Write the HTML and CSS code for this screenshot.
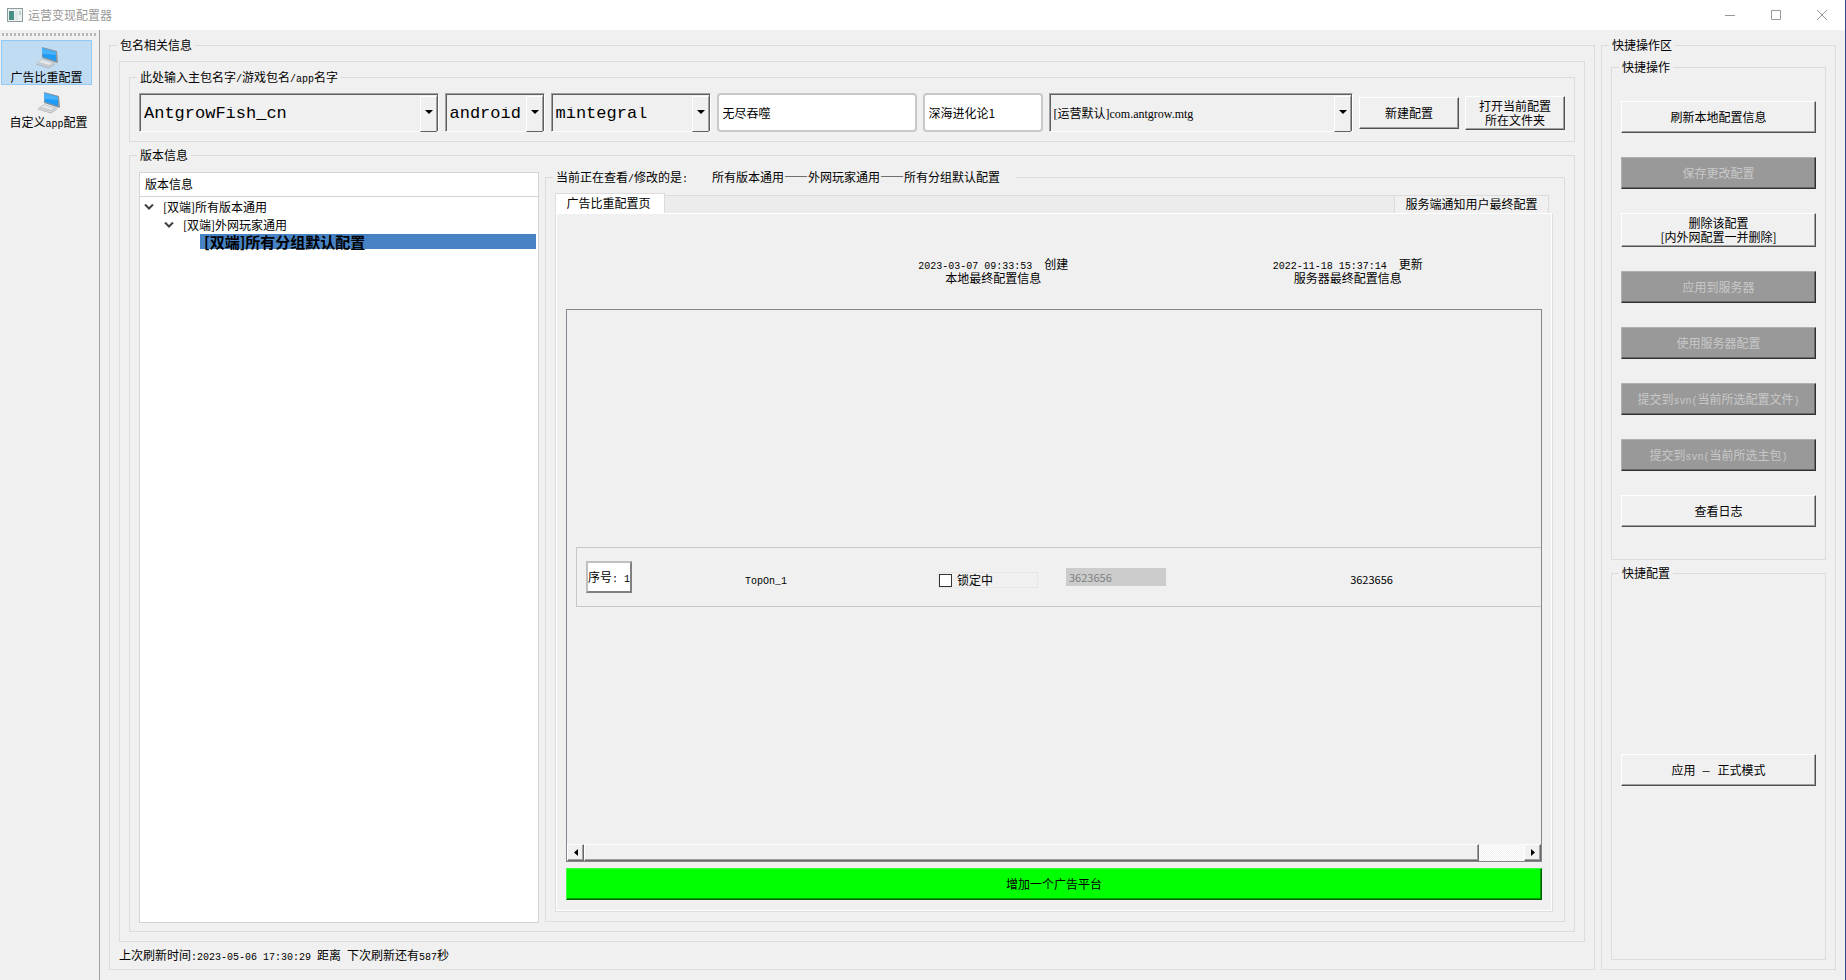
FILE: index.html
```html
<!DOCTYPE html>
<html lang="zh-CN">
<head>
<meta charset="utf-8">
<title>运营变现配置器</title>
<link rel="stylesheet" href="styles.css">
</head>
<body>
<svg class="defs" width="0" height="0" aria-hidden="true">
  <symbol id="laptop" viewBox="0 0 24 22">
    <path d="M7 0 22 4 23 15 22 16 7 11Z" fill="#8b959d"/>
    <path d="M7 1 21 5 21 14 8 10Z" fill="#1e9bf5"/>
    <path d="M7 1 21 5 21 8 7 7Z" fill="#45b2fa"/>
    <path d="M7 12 20 16 14 20 1 16Z" fill="#c6cacd"/>
    <path d="M7 13 17 16 14 18 4 15Z" fill="#e4e6e8"/>
    <path d="M1 17 14 21 20 17" fill="none" stroke="#b0b4b8"/>
  </symbol>
</svg>
<div class="window">
  <header class="titlebar">
    <svg class="app-icon" viewBox="0 0 16 14" width="16" height="14" aria-hidden="true">
      <rect x=".5" y=".5" width="15" height="13" fill="#eef1f2" stroke="#8f9a9f"/>
      <rect x="2" y="3" width="5" height="9" fill="#4a8f86"/>
      <rect x="8" y="3" width="3" height="9" fill="#dfe5e8"/>
      <rect x="12" y="3" width="2" height="4" fill="#b9d3c6"/>
    </svg>
    <h1 class="app-title">运营变现配置器</h1>
    <div class="controls">
      <button class="control" aria-label="最小化"><svg width="10" height="10" viewBox="0 0 10 10"><path d="M0 5.5H10"/></svg></button>
      <button class="control" aria-label="最大化"><svg width="10" height="10" viewBox="0 0 10 10"><path d="M.5.5H9.500V9.500H.5Z"/></svg></button>
      <button class="control" aria-label="关闭"><svg width="10" height="10" viewBox="0 0 10 10"><path d="M0 0 10 10M10 0 0 10"/></svg></button>
    </div>
  </header>
  <div class="body">
    <nav class="sidebar">
      <div class="grip"></div>
      <button class="tool tool-active"><svg width="24" height="22"><use href="#laptop"/></svg><span>广告比重配置</span></button>
      <button class="tool tool-wide"><svg width="24" height="22"><use href="#laptop"/></svg><span>自定义<span class="latin">app</span>配置</span></button>
    </nav>
    <main class="workspace">
      <fieldset class="group group-main">
        <legend>包名相关信息</legend>
        <div class="panel">
          <fieldset class="group group-package">
            <legend>此处输入主包名字<span class="latin">/</span>游戏包名<span class="latin">/app</span>名字</legend>
            <div class="fields">
              <div class="combo combo-app"><select aria-label="主包名字"><option>AntgrowFish_cn</option></select></div>
              <div class="combo combo-system"><select aria-label="平台"><option>android</option></select></div>
              <div class="combo combo-channel"><select aria-label="渠道"><option>mintegral</option></select></div>
              <input class="field field-game" type="text" value="无尽吞噬" aria-label="游戏包名">
              <input class="field field-name" type="text" value="深海进化论1" aria-label="app名字">
              <div class="combo combo-config"><select aria-label="配置"><option>[运营默认]com.antgrow.mtg</option></select></div>
              <button class="button button-field">新建配置</button>
              <button class="button button-field button-double">打开当前配置<br>所在文件夹</button>
            </div>
          </fieldset>
          <fieldset class="group group-version">
            <legend>版本信息</legend>
            <div class="split">
              <section class="tree">
                <h2 class="tree-head">版本信息</h2>
                <ul class="tree-list">
                  <li class="node"><svg width="10" height="6" viewBox="0 0 10 6"><path d="M1 .5 5 4.500 9 .5"/></svg>[双端]所有版本通用</li>
                  <li class="node node-child"><svg width="10" height="6" viewBox="0 0 10 6"><path d="M1 .5 5 4.500 9 .5"/></svg>[双端]外网玩家通用</li>
                  <li class="node-selected">[双端]所有分组默认配置</li>
                </ul>
              </section>
              <fieldset class="group group-edit">
                <legend>当前正在查看<span class="latin">/</span>修改的是<span class="latin">:</span><span class="path">所有版本通用——外网玩家通用——所有分组默认配置</span></legend>
                <div class="tabs">
                  <button class="tab tab-active">广告比重配置页</button>
                  <div class="tab-space"></div>
                  <button class="tab tab-server">服务端通知用户最终配置</button>
                  <div class="tab-end"></div>
                </div>
                <div class="pane">
                  <div class="summary">
                    <p class="stamp"><span class="latin">2023-03-07 09:33:53&nbsp; </span>创建<br>本地最终配置信息</p>
                    <p class="stamp"><span class="latin">2022-11-18 15:37:14&nbsp; </span>更新<br>服务器最终配置信息</p>
                  </div>
                  <div class="scroller">
                    <div class="viewport">
                      <div class="ad-row">
                        <span class="order">序号<span class="latin">: 1</span></span>
                        <span class="ad-name"><span class="latin">TopOn_1</span></span>
                        <label class="lock"><input type="checkbox">锁定中</label>
                        <input class="weight" type="text" value="3623656" disabled aria-label="本地配置">
                        <span class="server-value">3623656</span>
                      </div>
                    </div>
                    <div class="scrollbar">
                      <button class="arrow" aria-label="向左"><svg width="4" height="7" viewBox="0 0 4 7"><path d="M4 0V7L0 3.500Z"/></svg></button>
                      <div class="thumb"></div>
                      <div class="track"></div>
                      <button class="arrow" aria-label="向右"><svg width="4" height="7" viewBox="0 0 4 7"><path d="M0 0V7L4 3.500Z"/></svg></button>
                    </div>
                  </div>
                  <button class="button button-add">增加一个广告平台</button>
                </div>
              </fieldset>
            </div>
          </fieldset>
        </div>
        <p class="status">上次刷新时间<span class="latin">:2023-05-06 17:30:29 </span>距离<span class="latin"> </span>下次刷新还有<span class="latin">587</span>秒</p>
      </fieldset>
      <fieldset class="group group-quick">
        <legend>快捷操作区</legend>
        <div class="quick">
          <fieldset class="group group-actions">
            <legend>快捷操作</legend>
            <div class="actions">
              <button class="button">刷新本地配置信息</button>
              <button class="button" disabled>保存更改配置</button>
              <button class="button button-double">删除该配置<br>[内外网配置一并删除]</button>
              <button class="button" disabled>应用到服务器</button>
              <button class="button" disabled>使用服务器配置</button>
              <button class="button" disabled>提交到<span class="latin">svn(</span>当前所选配置文件<span class="latin">)</span></button>
              <button class="button" disabled>提交到<span class="latin">svn(</span>当前所选主包<span class="latin">)</span></button>
              <button class="button">查看日志</button>
            </div>
          </fieldset>
          <fieldset class="group group-mode">
            <legend>快捷配置</legend>
            <div class="mode"><button class="button">应用<span class="latin"> － </span>正式模式</button></div>
          </fieldset>
        </div>
      </fieldset>
    </main>
  </div>
</div>
</body>
</html>
```
FILE: styles.css
```css
* { box-sizing: border-box; }

body {
  margin: 0;
  background: #f0f0f0;
  color: #000;
  font: 12px/14px "Noto Sans CJK SC", "Liberation Sans", sans-serif;
}

button, input, select { font: inherit; color: inherit; margin: 0; }
h1, h2, p, ul { margin: 0; padding: 0; font-size: 12px; font-weight: 400; }

.defs { position: absolute; }
.latin { font-family: "Liberation Mono", monospace; font-size: 10px; line-height: 0; white-space: pre; }

.window {
  display: flex;
  flex-direction: column;
  height: 100vh;
  border-right: 1px solid #2b4a86;
}

.titlebar {
  display: flex;
  align-items: center;
  flex: none;
  height: 30px;
  padding-left: 7px;
  background: #fff;
  color: #999;
}
.app-title { flex: 1; margin-left: 5px; }
.controls { display: flex; }
.control {
  display: flex;
  align-items: center;
  justify-content: center;
  width: 46px;
  height: 30px;
  padding: 0;
  border: 0;
  background: none;
}
.control path { fill: none; stroke: #999; }

.body { display: flex; flex: 1; min-height: 0; }

.sidebar {
  flex: none;
  width: 100px;
  padding: 3px 3px 0 1px;
  border-right: 1px solid #a0a0a0;
}
.grip {
  height: 3px;
  margin: 0 -2px 4px 1px;
  background: repeating-linear-gradient(90deg, #b8b8b8 0 2px, #f0f0f0 2px 4px);
}
.tool {
  display: flex;
  flex-direction: column;
  align-items: center;
  width: 91px;
  height: 45px;
  padding: 6px 0 0;
  border: 1px solid transparent;
  background: none;
  white-space: nowrap;
}
.tool-wide { width: 95px; }
.tool > span { line-height: 15px; }
.tool-active { border-color: #90c8f6; background: #c0dcf3; }

.workspace { display: flex; flex: 1; gap: 6px; min-width: 0; padding: 8px 9px 10px; }

.group {
  min-width: 0;
  margin: 0;
  padding: 0;
  border: 1px solid #dcdcdc;
}
.group > legend { height: 15px; margin-left: -2px; padding: 0 3px; line-height: 13px; }
.group-main { display: flex; flex-direction: column; flex: 1; padding: 8px 9px 0; }

.panel {
  display: flex;
  flex: 1;
  flex-direction: column;
  gap: 6px;
  min-height: 0;
  padding: 8px 9px 9px;
  border: 1px solid #dcdcdc;
}
.status { padding: 5px 0 7px; line-height: 15px; }

.group-package { flex: none; padding: 8px 9px 9px; }
.fields { display: flex; align-items: center; gap: 6px; }

.combo {
  position: relative;
  height: 39px;
  border: 1px solid;
  border-color: #a0a0a0 #fff #fff #a0a0a0;
  box-shadow: inset 1px 1px #606060, inset -1px 0 #606060;
}
.combo select {
  width: 100%;
  height: 100%;
  padding: 3px 20px 0 4px;
  border: 0;
  background: none;
  appearance: none;
  font-family: "Liberation Mono", monospace;
  font-size: 17px;
}
.combo::before {
  content: "";
  position: absolute;
  top: 2px;
  right: 1px;
  width: 15px;
  height: 34px;
  border: 1px solid;
  border-color: #fff #a0a0a0 #606060 #fff;
  pointer-events: none;
}
.combo::after {
  content: "";
  position: absolute;
  top: 16px;
  right: 5px;
  border: 4px solid transparent;
  border-top-color: #000;
  border-bottom: 0;
  pointer-events: none;
}
.combo-app { flex: 1 1 299px; }
.combo-system { flex: none; width: 100px; }
.combo-channel { flex: none; width: 160px; }
.combo-config { flex: 1 1 304px; }
.combo-config select { font-family: "Liberation Serif", "Noto Sans CJK SC", serif; font-size: 12px; }

.field {
  height: 39px;
  padding: 0 4px;
  border: 2px solid #c8c8c8;
  border-radius: 4px;
  background: #fff;
}
.field-game { width: 200px; }
.field-name { width: 120px; }

.button {
  height: 32px;
  padding: 0;
  border: 1px solid;
  border-color: #fff #505050 #505050 #fff;
  background: #f0f0f0;
  box-shadow: inset -1px -1px #a0a0a0;
  white-space: nowrap;
}
.button:disabled {
  border-color: #b0b0b0 #303030 #303030 #b0b0b0;
  background: #999;
  color: #c8c8c8;
  box-shadow: inset -1px -1px #666;
}
.button-field { flex: none; width: 100px; }
.button-double { height: 34px; }

.group-version { flex: 1; min-height: 0; padding: 7px 9px 8px; }
.split { display: flex; gap: 6px; height: 100%; }

.tree {
  flex: none;
  width: 400px;
  margin-top: 2px;
  border: 1px solid #d4d4d4;
  background: #fff;
}
.tree-head { height: 24px; padding-left: 5px; border-bottom: 1px solid #d4d4d4; line-height: 22px; }
.tree-list { list-style: none; }
.node { display: flex; align-items: center; gap: 9px; height: 19px; padding-left: 4px; line-height: 16px; }
.node-child { height: 18px; padding-left: 24px; }
.node path { fill: none; stroke: #404040; stroke-width: 2; }
.node-selected {
  height: 15px;
  margin: 0 2px 0 60px;
  padding-left: 4px;
  background: #4682c4;
  font-size: 15px;
  font-weight: 700;
  line-height: 15px;
}

.group-edit { display: flex; flex: 1; flex-direction: column; margin-bottom: 1px; padding: 8px 11px 9px 9px; }
.group-edit > legend { padding-right: 16px; }
.path { margin-left: 24px; }

.tabs { display: flex; flex: none; align-items: flex-end; height: 20px; }
.tab { border: 1px solid #dcdcdc; border-bottom: 0; background: #f0f0f0; padding: 0; line-height: 14px; white-space: nowrap; }
.tab-active { width: 110px; height: 20px; padding: 0 3px 2px 0; background: #fff; }
.tab-space { flex: 1; height: 18px; border-top: 1px solid #dcdcdc; background: #ececec; }
.tab-server { width: 155px; height: 18px; padding-bottom: 2px; }
.tab-end { width: 4px; }

.pane {
  display: flex;
  flex: 1;
  flex-direction: column;
  min-height: 0;
  padding: 0 10px 11px;
  border: 1px solid #dcdcdc;
  border-top-color: #fff;
  box-shadow: inset 1px 0 #fff, inset -1px -1px #fff;
}
.summary {
  display: grid;
  flex: none;
  grid-template-columns: 354fr 354fr;
  height: 95px;
  padding: 43px 17px 0 250px;
  text-align: center;
}
.scroller {
  display: flex;
  flex: 1;
  flex-direction: column;
  min-height: 0;
  border: 1px solid #828790;
}
.viewport { display: flex; flex: 1; flex-direction: column; justify-content: center; padding-left: 9px; }
.ad-row {
  display: grid;
  grid-template-columns: 46px 1fr 100px 128px 375px;
  align-items: center;
  height: 60px;
  padding-left: 9px;
  border: 1px solid #c8c8c8;
  border-right: 0;
}
.order {
  height: 32px;
  border: 2px solid;
  border-color: #c0c0c0 #808080 #808080 #c0c0c0;
  background: #fff;
  line-height: 28px;
  white-space: nowrap;
}
.ad-name { padding: 4px 38px 0 0; text-align: center; }
.lock {
  display: flex;
  align-items: center;
  gap: 5px;
  height: 16px;
  margin-top: 6px;
  border: 1px solid #e6e6e6;
}
.lock input {
  width: 13px;
  height: 13px;
  border: 1px solid #333;
  background: #fff;
  appearance: none;
}
.weight {
  width: 100px;
  height: 18px;
  margin-left: 28px;
  padding: 0 3px;
  border: 0;
  background: #ccc;
  color: #808080;
  font-size: 11px;
}
.server-value { padding: 4px 0 0 36px; font-size: 11px; text-align: center; }

.scrollbar { display: flex; flex: none; height: 17px; }
.arrow, .thumb {
  border: 1px solid;
  border-color: #fff #696969 #696969 #fff;
  background: #f0f0f0;
  box-shadow: inset -1px -1px #a0a0a0;
}
.arrow { display: flex; align-items: center; justify-content: center; width: 17px; padding: 0; }
.thumb { flex: 895; }
.track { flex: 45; background: repeating-conic-gradient(#fff 0 25%, #f0f0f0 0 50%) 0 0 / 2px 2px; }
.button-add {
  flex: none;
  margin-top: 6px;
  border-color: #40ff40 #006000 #006000 #40ff40;
  background: #0f0;
  box-shadow: inset -1px -1px #00a000;
}

.group-quick { flex: none; width: 235px; padding: 7px 9px 9px; }
.quick { display: flex; flex-direction: column; gap: 6px; height: 100%; }
.group-actions { flex: none; padding: 26px 9px 32px; }
.actions { display: flex; flex-direction: column; gap: 24px; }
.group-mode { flex: 1; padding: 0 9px; }
.mode { display: flex; align-items: center; height: 100%; }
.mode .button { flex: 1; }
```
